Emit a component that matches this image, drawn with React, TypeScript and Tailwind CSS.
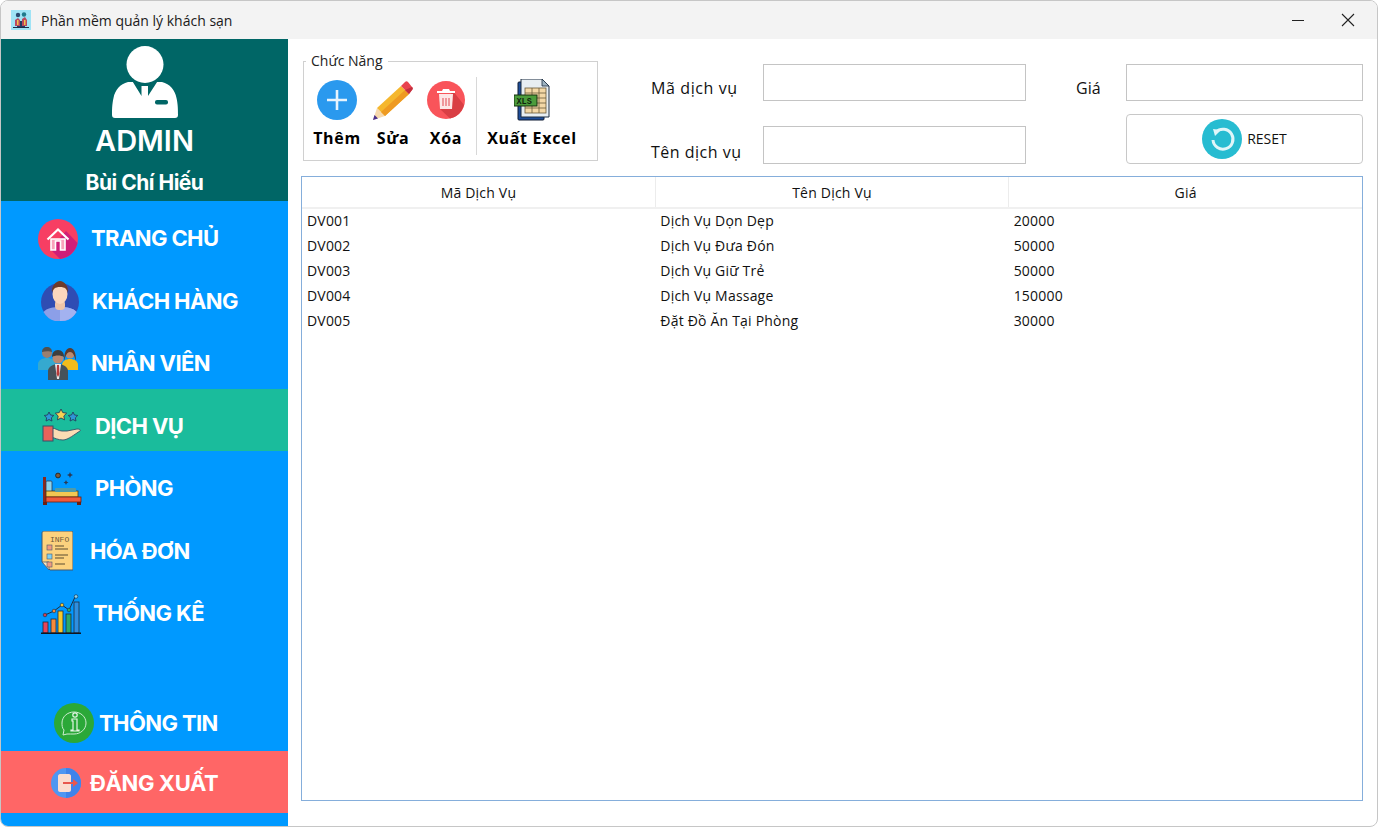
import type { ReactNode } from 'react'

function AppIcon() {
  return (
    <svg width="20" height="20" viewBox="0 0 20 20">
      <rect width="20" height="20" fill="#9fe3f5" />
      <rect x="6" y="11" width="8" height="6" fill="#243a63" />
      <circle cx="7" cy="5" r="2.2" fill="#2b4a70" />
      <circle cx="13" cy="4.5" r="2.2" fill="#1f7a8c" />
      <path d="M4 10l3-2 2 2v6H4zM11 9l3-2 2 3v6h-5z" fill="#b9485f" />
      <rect x="6" y="10" width="1.5" height="5" fill="#f2c14e" />
      <rect x="13" y="10" width="1.5" height="5" fill="#f2c14e" />
      <rect x="2" y="17" width="16" height="1" fill="#1c2c4c" />
    </svg>
  )
}

function AdminAvatar() {
  return (
    <svg width="66" height="74" viewBox="0 0 66 74">
      <path d="M16 36C8 38 3 44 1.500 52C0 58 0 65 0 69c0 2 1 3 3 3h60c2 0 3-1 3-3 0-4 0-11-1.500-17C63 44 58 38 50 36z" fill="#fff" />
      <path d="M19 33L29.500 50V40h6.500v10L47 33z" fill="#006666" />
      <circle cx="33" cy="18.500" r="18.500" fill="#fff" />
      <rect x="43" y="54" width="13" height="4.500" rx="2" fill="#006666" />
    </svg>
  )
}

function HomeIcon() {
  return (
    <svg width="40" height="40" viewBox="0 0 40 40">
      <circle cx="20" cy="20" r="20" fill="#f73e63" />
      <path d="M28 12L39.500 24A20 20 0 0 1 22 39.900L12 30z" fill="#cf1e78" />
      <path d="M13 20v11h4.500v-9h5v9H27V20z" fill="#f9a3bb" stroke="#fff" strokeWidth="1.600" />
      <path d="M9.500 20.500L20 10.500l10.500 10" fill="none" stroke="#fff" strokeWidth="2.200" />
    </svg>
  )
}

function CustomerIcon() {
  return (
    <svg width="38" height="40" viewBox="0 0 38 40">
      <circle cx="19" cy="21" r="19" fill="#2f4db3" />
      <path d="M2.500 31c3-4 10-5 16.500-5s13.500 1 16.500 5a19 19 0 0 1-33 0z" fill="#8c9fe8" />
      <path d="M19 26c6 0 13.500 1 16.500 5A19 19 0 0 1 19 40z" fill="#a3b2f0" />
      <rect x="14" y="19" width="10" height="10" rx="4" fill="#efc5a8" />
      <ellipse cx="19" cy="13" rx="7.500" ry="10" fill="#fbd7bd" />
      <path d="M11 12c-1-7 4-12 8-12s9 5 8 12c-1-4-3-6-8-6s-7 2-8 6z" fill="#6e3b2a" />
    </svg>
  )
}

function StaffIcon() {
  return (
    <svg width="40" height="33" viewBox="0 0 40 33">
      <circle cx="9" cy="6" r="5" fill="#9a7f70" />
      <path d="M4 5c0-3 2-5 5-5s5 2 5 5c-2-1-7-1-10 0z" fill="#505050" />
      <path d="M0 23v-6c0-4 5-6 9-6s9 2 9 6v6z" fill="#35a9cf" />
      <circle cx="32" cy="7" r="4.500" fill="#b98a72" />
      <path d="M26 14c0-8 2-13 6-13s6 5 6 13c-2-6-3-9-6-9s-4 3-6 9z" fill="#5a3a2e" />
      <path d="M24 23v-5c0-4 4-6 8-6s8 2 8 6v5z" fill="#f0bc1c" />
      <circle cx="20" cy="11" r="5.500" fill="#b98a72" />
      <path d="M14 10c0-4 2-7 6-7s6 3 6 7c-3-2-9-2-12 0z" fill="#3e3e3e" />
      <path d="M10 33v-9c0-4 5-7 10-7s10 3 10 7v9z" fill="#46525a" />
      <path d="M17 17h6l-2 15h-2z" fill="#e9e9e9" />
      <path d="M19 18h2l.5 9-1.500 3-1.500-3z" fill="#b83a3a" />
    </svg>
  )
}

function Star({ x, y, r, fill }: { x: number; y: number; r: number; fill: string }) {
  const pts: string[] = []
  for (let i = 0; i < 10; i++) {
    const a = -Math.PI / 2 + (i * Math.PI) / 5
    const rad = i % 2 === 0 ? r : r * 0.5
    pts.push(`${x + rad * Math.cos(a)},${y + rad * Math.sin(a)}`)
  }
  return <polygon points={pts.join(' ')} fill={fill} stroke="#24405e" strokeWidth="0.9" />
}

function ServiceIcon() {
  return (
    <svg width="40" height="34" viewBox="0 0 40 34">
      <Star x={7} y={8} r={5} fill="#2f97d8" />
      <Star x={19} y={6} r={6} fill="#f7d154" />
      <Star x={31} y={8} r={5} fill="#2f97d8" />
      <path d="M9 19c5 0 7 3 11 3h5l10-2c3 0 4 1 3 2-5 3-12 9-17 9-5 0-8-2-12-3z" fill="#fbdcb4" stroke="#35506b" strokeWidth="0.9" />
      <rect x="1" y="17" width="10" height="15" fill="#e8635a" stroke="#35506b" strokeWidth="1" />
    </svg>
  )
}

function RoomIcon() {
  return (
    <svg width="40" height="34" viewBox="0 0 40 34">
      <circle cx="16" cy="3.500" r="2.400" fill="#7d5a3c" stroke="#222" strokeWidth="0.9" />
      <path d="M28 0l.9 2.100 2.100.9-2.100.9L28 6l-.9-2.100-2.100-.9 2.100-.9zM24 8l.8 1.700 1.700.8-1.700.8-.8 1.700-.8-1.700-1.700-.8 1.700-.8z" fill="#2b3a55" />
      <rect x="1" y="5" width="3" height="28" fill="#8a2a1e" />
      <rect x="4" y="9" width="6" height="12" rx="1" fill="#8fd3ea" stroke="#2b3a55" strokeWidth="0.8" />
      <rect x="4" y="19" width="32" height="6" fill="#f3c752" stroke="#4d3a1a" strokeWidth="0.8" />
      <rect x="13" y="16" width="21" height="4" rx="1" fill="#4f9ba8" />
      <rect x="4" y="25" width="35" height="5" fill="#ef5a3c" stroke="#6b1f12" strokeWidth="0.8" />
      <rect x="35" y="30" width="4" height="3" fill="#6b1f12" />
      <rect x="1" y="30" width="4" height="3" fill="#6b1f12" />
    </svg>
  )
}

function InvoiceIcon() {
  return (
    <svg width="32" height="40" viewBox="0 0 32 40">
      <path d="M1 2c0-1 1-2 2-2h28c0 0 1 1 1 2v37H9l-8-8z" fill="#fcd27e" stroke="#47586e" strokeWidth="1" />
      <path d="M1 31h7v8z" fill="#f6e6c0" stroke="#47586e" strokeWidth="0.8" />
      <text x="9" y="11" fontSize="8" fontFamily="Liberation Mono, monospace" fill="#6c5a3a">INFO</text>
      <rect x="6" y="14" width="5" height="5" fill="#ef9a80" stroke="#47586e" strokeWidth="0.6" />
      <rect x="6" y="23" width="5" height="5" fill="#7fd0f0" stroke="#47586e" strokeWidth="0.6" />
      <rect x="6" y="31" width="5" height="5" fill="#ef9a80" stroke="#47586e" strokeWidth="0.6" />
      <path d="M14 15h9M14 18h13M14 24h13M14 27h9M14 33h10" stroke="#5b4c30" strokeWidth="1.200" />
    </svg>
  )
}

function ChartIcon() {
  return (
    <svg width="40" height="40" viewBox="0 0 40 40">
      <rect x="2" y="28" width="5" height="11" fill="#e8445a" stroke="#1f2c3f" strokeWidth="0.8" />
      <rect x="10" y="25" width="5" height="14" fill="#f48a3c" stroke="#1f2c3f" strokeWidth="0.8" />
      <rect x="17" y="17" width="5" height="22" fill="#f7c92c" stroke="#1f2c3f" strokeWidth="0.8" />
      <rect x="25" y="20" width="5" height="19" fill="#2ea86a" stroke="#1f2c3f" strokeWidth="0.8" />
      <rect x="33" y="8" width="5" height="31" fill="#2f8fe0" stroke="#1f2c3f" strokeWidth="0.8" />
      <path d="M4 21l9-4 8-6 7 5 6-13" fill="none" stroke="#1f2c3f" strokeWidth="1" />
      <circle cx="4" cy="21" r="1.800" fill="#d04050" stroke="#1f2c3f" strokeWidth="0.6" />
      <circle cx="13" cy="17" r="1.800" fill="#f48a3c" stroke="#1f2c3f" strokeWidth="0.6" />
      <circle cx="21" cy="11" r="1.800" fill="#f7c92c" stroke="#1f2c3f" strokeWidth="0.6" />
      <circle cx="28" cy="16" r="1.800" fill="#2ea86a" stroke="#1f2c3f" strokeWidth="0.6" />
      <circle cx="35" cy="2.500" r="1.800" fill="#8fd3ea" stroke="#1f2c3f" strokeWidth="0.6" />
      <rect x="0" y="38.500" width="40" height="1.500" fill="#10151f" />
    </svg>
  )
}

function InfoIcon() {
  return (
    <svg width="40" height="40" viewBox="0 0 40 40">
      <circle cx="20" cy="20" r="20" fill="#2ba838" />
      <path d="M20 9c7 0 12 5 12 11s-5 11-12 11c-2 0-5 0-7 0l-4 1 1-5c-2-2-2-5-2-7 0-6 5-11 12-11z" fill="none" stroke="#cdeccf" strokeWidth="1" />
      <circle cx="21" cy="12" r="2.200" fill="none" stroke="#e6f6e7" strokeWidth="1.200" />
      <path d="M18 16h5v11h2v1h-8v-1h2v-9h-1z" fill="none" stroke="#e6f6e7" strokeWidth="1.200" />
    </svg>
  )
}

function LogoutIcon() {
  return (
    <svg width="30" height="30" viewBox="0 0 30 30">
      <circle cx="15" cy="15" r="15" fill="#4f96f2" />
      <path d="M15 0a15 15 0 0 1 0 30z" fill="#3f83ea" />
      <path d="M7 8c0-1 1-2 2-2h9c1 0 2 1 2 2v14c0 1-1 2-2 2H9c-1 0-2-1-2-2z" fill="#fbdccf" />
      <path d="M12 14h10v-3l5 4-5 4v-3H12z" fill="#e8574e" />
    </svg>
  )
}

function AddIcon() {
  return (
    <svg width="40" height="40" viewBox="0 0 40 40">
      <circle cx="20" cy="20" r="20" fill="#2a99ee" />
      <path d="M20 10v20M10 20h20" stroke="#e8f4fd" strokeWidth="2.600" />
    </svg>
  )
}

function PencilIcon() {
  return (
    <svg width="40" height="40" viewBox="0 0 40 40">
      <path d="M0 40l4-12 8 8z" fill="#f7d9ae" />
      <path d="M0 40l1.500-5 3.500 3.500z" fill="#4a2f8c" />
      <path d="M4 28L28 6l8 8-24 22z" fill="#f5b72e" />
      <path d="M8 32L32 10l4 4-24 22z" fill="#ee9a22" />
      <path d="M28 6l4-4 c1-1 2-1 3 0l4 5c1 1 1 2 0 3l-3 4z" fill="#e8434f" />
      <path d="M32 10l7-3c1 1 1 2 0 3l-3 4z" fill="#c22f3f" />
    </svg>
  )
}

function TrashIcon() {
  return (
    <svg width="38" height="38" viewBox="0 0 38 38">
      <circle cx="19" cy="19" r="19" fill="#f9545a" />
      <path d="M26 10L37 24A19 19 0 0 1 23 37.500L13 28z" fill="#d93e44" />
      <path d="M10 10h18v2H10z" fill="#fff" />
      <path d="M15 10l1-2h6l1 2z" fill="#fff" />
      <path d="M12 13h14l-1 15H13z" fill="#fde6e6" />
      <path d="M16 17v8M19 17v8M22 17v8" stroke="#e8757a" strokeWidth="1.400" />
    </svg>
  )
}

function ExcelIcon() {
  return (
    <svg width="36" height="42" viewBox="0 0 36 42">
      <rect x="4" y="3" width="26" height="38" rx="1" fill="#1f4e9a" stroke="#0f1b33" strokeWidth="1" />
      <path d="M7 0h21l7 7v31H7z" fill="#e8eef2" stroke="#1c2c40" strokeWidth="1" />
      <path d="M28 0v7h7z" fill="#9fb4c2" stroke="#1c2c40" strokeWidth="0.8" />
      <rect x="11" y="9" width="21" height="25" fill="#f4d8a6" stroke="#6a5a3a" strokeWidth="0.8" />
      <path d="M11 14h21M11 19h21M11 24h21M11 29h21M18 9v25M25 9v25" stroke="#6a5a3a" strokeWidth="0.8" />
      <rect x="0" y="16" width="23" height="11" fill="#4c9c3c" stroke="#14300f" strokeWidth="1" />
      <text x="2.500" y="24.500" fontSize="8.500" fontWeight="700" fontFamily="Liberation Mono, monospace" fill="#10240c">XLS</text>
    </svg>
  )
}

function ResetIcon() {
  return (
    <svg width="40" height="40" viewBox="0 0 40 40">
      <circle cx="20" cy="20" r="20" fill="#27bcd1" />
      <path d="M14 13a10 10 0 1 1-3 8" fill="none" stroke="#dff6f9" strokeWidth="3" />
      <path d="M11 10l8 1-6 6z" fill="#dff6f9" />
    </svg>
  )
}

function NavItem({ icon, label, pad, gap, active }: { icon: ReactNode; label: string; pad: string; gap: string; active?: string }) {
  return (
    <div className={`flex h-[62.5px] items-center pt-[13px] ${pad} ${gap} ${active ?? ''}`}>
      <div className="flex shrink-0 items-center">{icon}</div>
      <span className="text-[22px] font-bold tracking-[-0.6px] text-white">{label}</span>
    </div>
  )
}

function ToolButton({ icon, label, width }: { icon: ReactNode; label: string; width: string }) {
  return (
    <div className={`flex flex-col items-center ${width}`}>
      <div className="flex h-[42px] items-center">{icon}</div>
      <span className="mt-[6px] whitespace-nowrap text-[16px] leading-[22px] font-bold tracking-[0.7px] text-black">{label}</span>
    </div>
  )
}

const rows = [
  ['DV001', 'Dịch Vụ Dọn Dẹp', '20000'],
  ['DV002', 'Dịch Vụ Đưa Đón', '50000'],
  ['DV003', 'Dịch Vụ Giữ Trẻ', '50000'],
  ['DV004', 'Dịch Vụ Massage', '150000'],
  ['DV005', 'Đặt Đồ Ăn Tại Phòng', '30000'],
]

export default function App() {
  return (
    <div className="h-[829px] w-[1379px] overflow-hidden bg-white font-['Open_Sans',sans-serif] text-[#111]">
      <div className="flex h-[827px] w-[1378px] flex-col overflow-hidden rounded-lg border border-[#c6c6c6]">
        {/* title bar */}
        <div className="flex h-[38px] shrink-0 items-center bg-[#f3f3f3] pl-[10px]">
          <AppIcon />
          <span className="ml-[10px] text-[14px] text-[#1a1a1a]">Phần mềm quản lý khách sạn</span>
          <div className="ml-auto flex items-center gap-[37px] pr-[22px]">
            <div className="h-px w-[12px] bg-[#222]" />
            <svg width="14" height="14" viewBox="0 0 14 14">
              <path d="M1 1l12 12M13 1L1 13" stroke="#222" strokeWidth="1.100" />
            </svg>
          </div>
        </div>

        <div className="flex min-h-0 flex-1">
          {/* sidebar */}
          <div className="flex w-[287px] shrink-0 flex-col bg-[#0099ff] font-['Inter',sans-serif]">
            <div className="flex h-[162px] shrink-0 flex-col items-center bg-[#006666] pt-[7px] text-white">
              <AdminAvatar />
              <div className="mt-[1px] text-[29px] leading-[40px] font-semibold">ADMIN</div>
              <div className="mt-[8px] text-[21px] leading-[28px] font-bold tracking-[-0.5px]">Bùi Chí Hiếu</div>
            </div>
            <NavItem icon={<HomeIcon />} label="TRANG CHỦ" pad="pl-[37px]" gap="gap-[13px]" />
            <NavItem icon={<CustomerIcon />} label="KHÁCH HÀNG" pad="pl-[40px]" gap="gap-[13px]" />
            <NavItem icon={<StaffIcon />} label="NHÂN VIÊN" pad="pl-[37px]" gap="gap-[13px]" />
            <NavItem icon={<ServiceIcon />} label="DỊCH VỤ" pad="pl-[41px]" gap="gap-[13px]" active="bg-[#1abc9c]" />
            <NavItem icon={<RoomIcon />} label="PHÒNG" pad="pl-[41px]" gap="gap-[13px]" />
            <NavItem icon={<InvoiceIcon />} label="HÓA ĐƠN" pad="pl-[40px]" gap="gap-[17px]" />
            <NavItem icon={<ChartIcon />} label="THỐNG KÊ" pad="pl-[40px]" gap="gap-[12px]" />
            <div className="flex-1" />
            <div className="flex h-[60px] shrink-0 items-center gap-[5px] pt-[4px] pl-[53px]">
              <InfoIcon />
              <span className="text-[22px] font-bold tracking-[-0.6px] text-white">THÔNG TIN</span>
            </div>
            <div className="mb-[13px] flex h-[62px] shrink-0 items-center gap-[9px] bg-[#ff6666] pt-[2px] pl-[50px]">
              <LogoutIcon />
              <span className="text-[22px] font-bold tracking-[-0.4px] text-white">ĐĂNG XUẤT</span>
            </div>
          </div>

          {/* content */}
          <div className="flex min-w-0 flex-1 flex-col pt-[12px] pb-[25px] pl-[13px] pr-[14px]">
            <div className="flex h-[125px] shrink-0 items-start">
              <fieldset className="ml-[2px] h-[110px] w-[295px] border border-[#d0d0d0] pl-[8px]">
                <legend className="-ml-[6px] px-[5px] text-[14px] leading-[20px] text-[#222]">Chức Năng</legend>
                <div className="flex items-start pt-[8px]">
                  <ToolButton icon={<AddIcon />} label="Thêm" width="w-[50px]" />
                  <ToolButton icon={<PencilIcon />} label="Sửa" width="ml-[6px] w-[50px]" />
                  <ToolButton icon={<TrashIcon />} label="Xóa" width="ml-[3px] w-[50px]" />
                  <div className="ml-[5px] -mt-[2px] h-[78px] w-px bg-[#d8d8d8]" />
                  <div className="ml-[10px]">
                    <ToolButton icon={<ExcelIcon />} label="Xuất Excel" width="w-[90px]" />
                  </div>
                </div>
              </fieldset>
              <div className="ml-[53px] grid grid-cols-[112px_263px_100px_237px] grid-rows-[37px_50px] gap-y-[13px] pt-[13px]">
                <div className="flex items-center pt-[10px] text-[16px] tracking-[0.6px]">Mã dịch vụ</div>
                <div className="border border-[#c4c4c4] bg-white" />
                <div className="flex items-center pt-[10px] pl-[50px] text-[16px]">Giá</div>
                <div className="border border-[#c4c4c4] bg-white" />
                <div className="flex items-end text-[16px] leading-[24px] tracking-[0.5px]">Tên dịch vụ</div>
                <div className="mt-[12px] border border-[#c4c4c4] bg-white" />
                <div />
                <div className="flex items-center justify-center gap-[5px] rounded-[4px] border border-[#c8c8c8] bg-white">
                  <ResetIcon />
                  <span className="pb-[2px] text-[14px]">RESET</span>
                </div>
              </div>
            </div>

            <div className="min-h-0 flex-1 border border-[#85aedb]">
              <table className="w-full table-fixed border-collapse text-[14px] tracking-[0.2px]">
                <thead>
                  <tr className="h-[31px] border-b-2 border-[#f0f0f0]">
                    <th className="border-r border-[#ececec] font-normal">Mã Dịch Vụ</th>
                    <th className="border-r border-[#ececec] font-normal">Tên Dịch Vụ</th>
                    <th className="font-normal">Giá</th>
                  </tr>
                </thead>
                <tbody>
                  {rows.map((r) => (
                    <tr key={r[0]} className="h-[25px]">
                      {r.map((c) => (
                        <td key={c} className="px-[5px] pb-[2px] leading-[23px]">{c}</td>
                      ))}
                    </tr>
                  ))}
                </tbody>
              </table>
            </div>
          </div>
        </div>
      </div>
    </div>
  )
}
